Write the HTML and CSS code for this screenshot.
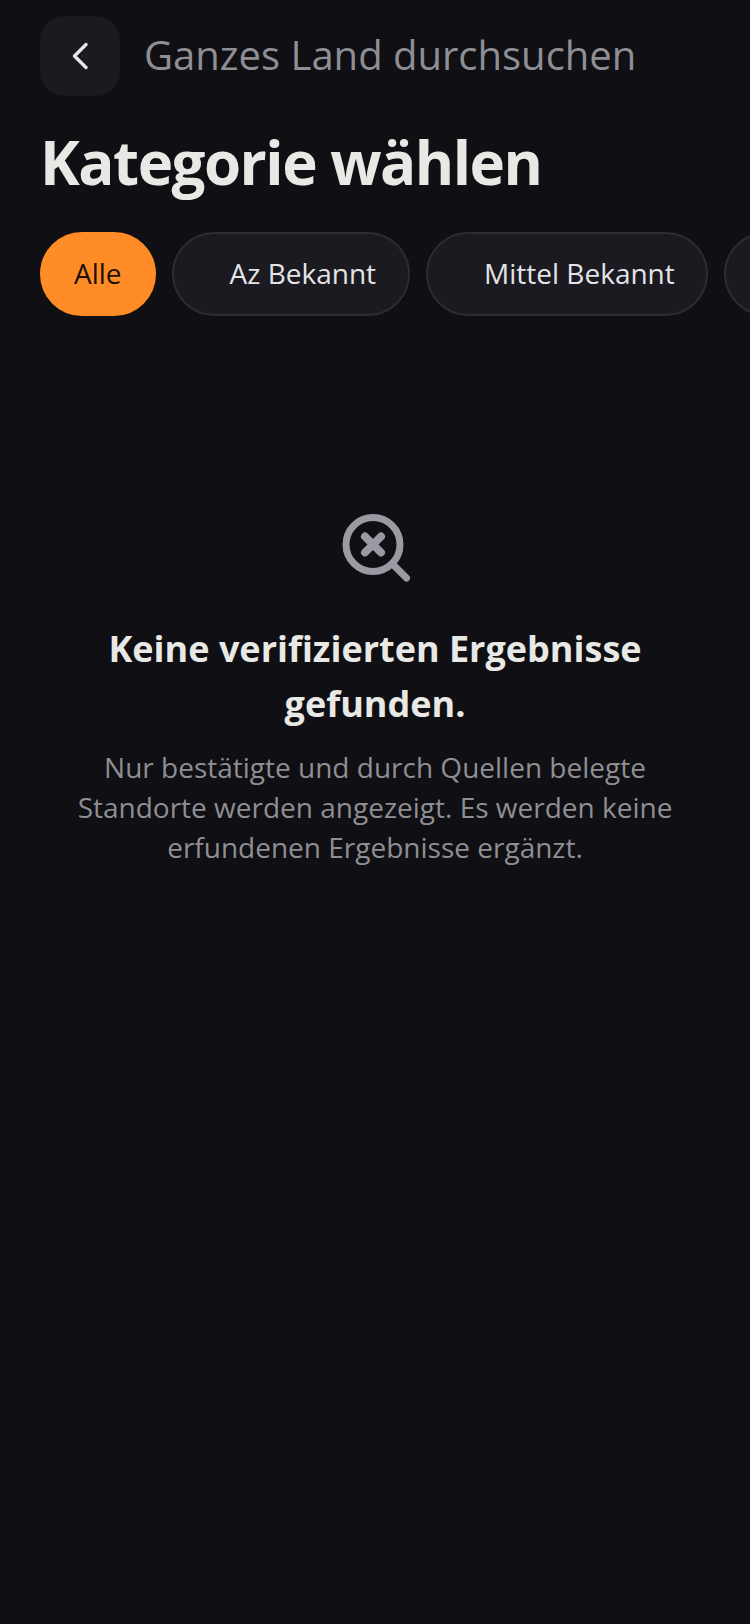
FILE: index.html
```html
<!DOCTYPE html>
<html lang="de">
<head>
    <meta charset="UTF-8">
    <meta name="viewport" content="width=device-width, initial-scale=1.0">
    <title>Kategorie wählen</title>
    <link rel="stylesheet" href="styles.css">
</head>
<body>
    <div class="screen">
        <div class="topbar">
            <button class="back">
                <svg width="28" height="32" viewBox="0 0 28 32" fill="none">
                    <path d="M20 4.5 L8.5 16 L20 27.5" stroke="#e8e8ea" stroke-width="3.4" stroke-linecap="round" stroke-linejoin="round"/>
                </svg>
            </button>
            <div class="place">Ganzes Land durchsuchen</div>
        </div>
        <h1 class="title">Kategorie wählen</h1>
        <div class="chips">
            <div class="chip active">Alle</div>
            <div class="chip spaced">Az Bekannt</div>
            <div class="chip spaced chip-short">Mittel Bekannt</div>
            <div class="chip spaced chip-cut"></div>
        </div>
        <div class="empty">
            <svg class="empty-icon" width="72" height="72" viewBox="0 0 72 72" fill="none" stroke="#9a9aa2" stroke-width="7" stroke-linecap="round">
                <circle cx="34" cy="33.5" r="27"/>
                <path d="M53 52.6 L67.5 67"/>
                <path d="M26 25.5 L42 41.5 M42 25.5 L26 41.5" stroke-width="8"/>
            </svg>
            <h2 class="empty-title">Keine verifizierten Ergebnisse gefunden.</h2>
            <p class="empty-text">Nur bestätigte und durch Quellen belegte Standorte werden angezeigt. Es werden keine erfundenen Ergebnisse ergänzt.</p>
        </div>
    </div>
</body>
</html>
```

FILE: styles.css
```css
html, body {
    margin: 0;
    padding: 0;
    height: 100%;
}
body {
    font-family: "Open Sans", sans-serif;
    background: #0f0f14;
    color: #e8e8e4;
    overflow: hidden;
}
.screen {
    height: 1624px;
    padding-top: 16px;
    box-sizing: border-box;
}
.topbar {
    display: flex;
    align-items: center;
    gap: 24px;
    padding-left: 40px;
}
.back {
    width: 80px;
    height: 80px;
    border: none;
    padding: 0;
    border-radius: 24px;
    background: #1a1a20;
    display: flex;
    align-items: center;
    justify-content: center;
}
.place {
    font-size: 40px;
    line-height: 78px;
    padding-bottom: 2px;
    color: #8e8e93;
}
.title {
    margin: 28px 0 0;
    padding-left: 40px;
    font-size: 60px;
    line-height: 76px;
    font-weight: 700;
    letter-spacing: -1.5px;
    color: #e8e8e4;
}
.chips {
    display: flex;
    gap: 16px;
    margin-top: 32px;
    padding-left: 40px;
    overflow: hidden;
}
.chip {
    flex: none;
    height: 84px;
    box-sizing: border-box;
    padding: 0 32px;
    border: 2px solid #2c2c33;
    border-radius: 42px;
    background: #1a1a20;
    font-size: 28px;
    line-height: 78px;
    color: #e4e4e8;
}
.chip.spaced {
    padding-left: 56px;
}
.chip.chip-short {
    padding-right: 31px;
}
.chip.chip-cut {
    width: 200px;
}
.chip.active {
    background: #ff8c26;
    border-color: #ff8c26;
    color: #1c1006;
}
.empty {
    display: flex;
    flex-direction: column;
    align-items: center;
    margin-top: 195px;
    padding: 0 64px;
    text-align: center;
}
.empty-title {
    margin: 38px 0 0;
    font-size: 36px;
    line-height: 55px;
    font-weight: 700;
    color: #e8e8e4;
}
.empty-text {
    margin: 15.5px 0 0;
    font-size: 28px;
    line-height: 40px;
    color: #8e8e93;
}
```
